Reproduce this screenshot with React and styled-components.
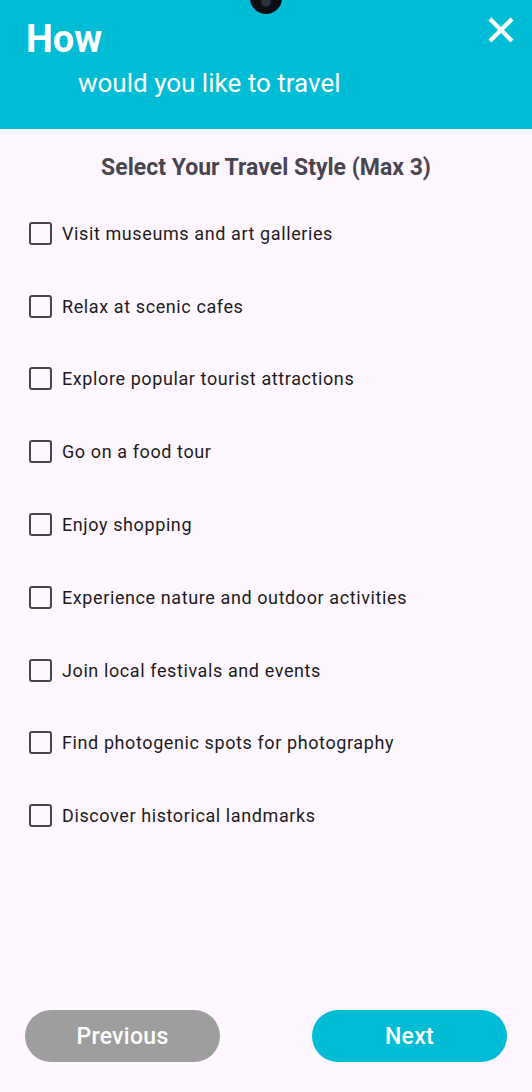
import React, { useState } from "react";
import styled, { createGlobalStyle } from "styled-components";

const GlobalStyle = createGlobalStyle`
  html, body {
    margin: 0;
    padding: 0;
    background: #fef7ff;
  }
  * {
    box-sizing: border-box;
  }
`;

const Screen = styled.div`
  position: relative;
  width: 532px;
  height: 1092px;
  display: flex;
  flex-direction: column;
  background: #fef7ff;
  font-family: Roboto, "Noto Sans", sans-serif;
  overflow: hidden;
`;

const Camera = styled.div`
  position: absolute;
  top: -18px;
  left: 250px;
  width: 32px;
  height: 32px;
  border-radius: 50%;
  background: radial-gradient(circle at 50% 62%, #2a3340 0 4px, #0b0d12 6px);
  z-index: 2;
`;

const Header = styled.header`
  height: 129px;
  background: #00bcd4;
  padding: 14px 16px 0 26px;
  display: flex;
  justify-content: space-between;
  align-items: flex-start;
  flex-shrink: 0;
`;

const HeaderText = styled.div`
  display: flex;
  flex-direction: column;
  color: #fff;
`;

const HeadTitle = styled.h1`
  margin: 0;
  font-size: 38px;
  font-weight: 700;
  line-height: 51px;
`;

const HeadSub = styled.div`
  margin-left: 52px;
  font-size: 26px;
  font-weight: 400;
  line-height: 36px;
`;

const CloseButton = styled.button`
  border: none;
  background: transparent;
  padding: 0;
  margin-top: 1px;
  width: 30px;
  height: 30px;
  display: flex;
  align-items: center;
  justify-content: center;
  cursor: pointer;
`;

const Title = styled.h2`
  margin: 26px 0 0;
  text-align: center;
  font-size: 23px;
  font-weight: 700;
  line-height: 26px;
  color: #49454f;
`;

const List = styled.div`
  margin-top: 16px;
  display: flex;
  flex-direction: column;
  padding-left: 29px;
`;

const Row = styled.label`
  height: 72.8px;
  display: flex;
  align-items: center;
  gap: 10px;
  cursor: pointer;
`;

const Box = styled.span`
  width: 23px;
  height: 23px;
  border: 2.5px solid #49454f;
  border-radius: 3px;
  background: ${(p) => (p.checked ? "#49454f" : "transparent")};
  flex-shrink: 0;
`;

const ItemText = styled.span`
  font-size: 18px;
  color: #1d1b20;
  letter-spacing: 0.6px;
`;

const Footer = styled.div`
  margin-top: auto;
  padding: 0 25px 30px 25px;
  display: flex;
  justify-content: space-between;
`;

const NavButton = styled.button`
  width: 195px;
  height: 52px;
  border: none;
  border-radius: 26px;
  background: ${(p) => (p.primary ? "#00bcd4" : "#9e9e9e")};
  color: #fff;
  font-family: Roboto, "Noto Sans", sans-serif;
  font-size: 23px;
  font-weight: 500;
  letter-spacing: 0.3px;
  cursor: pointer;
`;

const options = [
  "Visit museums and art galleries",
  "Relax at scenic cafes",
  "Explore popular tourist attractions",
  "Go on a food tour",
  "Enjoy shopping",
  "Experience nature and outdoor activities",
  "Join local festivals and events",
  "Find photogenic spots for photography",
  "Discover historical landmarks",
];

const App = () => {
  const [picked, setPicked] = useState([]);

  const toggle = (opt) => {
    if (picked.includes(opt)) setPicked(picked.filter((p) => p !== opt));
    else if (picked.length < 3) setPicked([...picked, opt]);
  };

  return (
    <Screen>
      <GlobalStyle />
      <Camera />
      <Header>
        <HeaderText>
          <HeadTitle>How</HeadTitle>
          <HeadSub>would you like to travel</HeadSub>
        </HeaderText>
        <CloseButton aria-label="close">
          <svg width="26" height="26" viewBox="0 0 26 26">
            <path
              d="M2 2 L24 24 M24 2 L2 24"
              stroke="#fff"
              strokeWidth="4.2"
              strokeLinecap="butt"
            />
          </svg>
        </CloseButton>
      </Header>
      <Title>Select Your Travel Style (Max 3)</Title>
      <List>
        {options.map((opt) => (
          <Row key={opt} onClick={() => toggle(opt)}>
            <Box checked={picked.includes(opt)} />
            <ItemText>{opt}</ItemText>
          </Row>
        ))}
      </List>
      <Footer>
        <NavButton>Previous</NavButton>
        <NavButton primary>Next</NavButton>
      </Footer>
    </Screen>
  );
};

export default App;
